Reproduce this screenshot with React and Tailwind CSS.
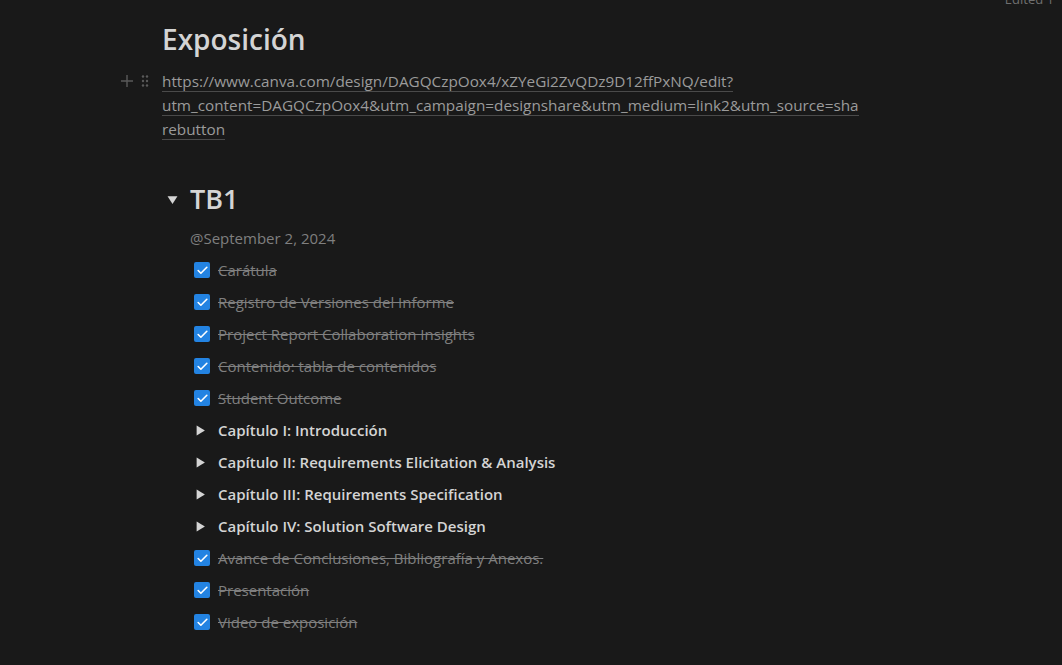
import { Check } from 'lucide-react';

const font = { fontFamily: '"Open Sans", "Noto Sans", sans-serif' };

const items = [
  { type: 'todo', text: 'Carátula' },
  { type: 'todo', text: 'Registro de Versiones del Informe' },
  { type: 'todo', text: 'Project Report Collaboration Insights' },
  { type: 'todo', text: 'Contenido: tabla de contenidos' },
  { type: 'todo', text: 'Student Outcome' },
  { type: 'toggle', text: 'Capítulo I: Introducción' },
  { type: 'toggle', text: 'Capítulo II: Requirements Elicitation & Analysis' },
  { type: 'toggle', text: 'Capítulo III: Requirements Specification' },
  { type: 'toggle', text: 'Capítulo IV: Solution Software Design' },
  { type: 'todo', text: 'Avance de Conclusiones, Bibliografía y Anexos.' },
  { type: 'todo', text: 'Presentación' },
  { type: 'todo', text: 'Video de exposición' },
];

function Triangle({ down, className }) {
  return (
    <svg viewBox="0 0 10 10" className={className} fill="currentColor">
      {down ? <path d="M0.5 2h9L5 9z" /> : <path d="M1.5 0.5v9L9 5z" />}
    </svg>
  );
}

function Row({ item }) {
  if (item.type === 'todo') {
    return (
      <div className="flex h-8 items-center">
        <div className="ml-[4px] mr-[8px] grid h-4 w-4 place-items-center rounded-[2px] bg-[#2383e2]">
          <Check className="h-[13px] w-[13px] text-white" strokeWidth={3} />
        </div>
        <span className="text-[15px] text-[#7f7f7f] line-through decoration-[#7f7f7f]">{item.text}</span>
      </div>
    );
  }
  return (
    <div className="flex h-8 items-center">
      <div className="flex w-[28px] items-center">
        <Triangle className="ml-[5px] h-[11px] w-[11px] text-[#d4d4d4]" />
      </div>
      <span className="text-[15px] font-semibold text-[#d4d4d4]">{item.text}</span>
    </div>
  );
}

export default function App() {
  return (
    <div className="relative min-h-[665px] w-full overflow-hidden bg-[#191919]" style={font}>
      <div className="absolute right-[8px] top-[-8px] text-[13px] leading-[14px] text-[#6f6f6f]">Edited 1</div>

      <div className="pl-[162px] pt-[20px]">
        <h1 className="text-[28px] font-semibold leading-[38px] text-[#d4d4d4]">Exposición</h1>

        <div className="relative mt-[11px] text-[15.3px] leading-[24px] text-[#9b9b9b]">
          <div className="absolute left-[-42px] top-[0px] flex h-6 items-center gap-[6px] text-[#5a5a5a]">
            <svg viewBox="0 0 14 14" className="h-[14px] w-[14px]" stroke="currentColor" strokeWidth="1.4">
              <path d="M7 1v12M1 7h12" />
            </svg>
            <svg viewBox="0 0 10 14" className="h-[14px] w-[10px]" fill="currentColor">
              <circle cx="3" cy="2.5" r="1.2" />
              <circle cx="7" cy="2.5" r="1.2" />
              <circle cx="3" cy="7" r="1.2" />
              <circle cx="7" cy="7" r="1.2" />
              <circle cx="3" cy="11.5" r="1.2" />
              <circle cx="7" cy="11.5" r="1.2" />
            </svg>
          </div>
          <div>
            <span className="border-b border-[#4a4a4a]">https://www.canva.com/design/DAGQCzpOox4/xZYeGi2ZvQDz9D12ffPxNQ/edit?</span>
          </div>
          <div>
            <span className="border-b border-[#4a4a4a]">utm_content=DAGQCzpOox4&amp;utm_campaign=designshare&amp;utm_medium=link2&amp;utm_source=sha</span>
          </div>
          <div>
            <span className="border-b border-[#4a4a4a]">rebutton</span>
          </div>
        </div>

        <div className="mt-[39px] flex items-center">
          <div className="flex w-[28px] items-center">
            <Triangle down className="ml-[5px] h-[11px] w-[11px] text-[#d4d4d4]" />
          </div>
          <h2 className="text-[27px] font-semibold leading-[38px] text-[#d4d4d4]">TB1</h2>
        </div>

        <div className="pl-[28px]">
          <div className="mt-[4px] flex h-8 items-center text-[15px] text-[#7f7f7f]">@September 2, 2024</div>
          {items.map((item, i) => (
            <Row key={i} item={item} />
          ))}
        </div>
      </div>
    </div>
  );
}
